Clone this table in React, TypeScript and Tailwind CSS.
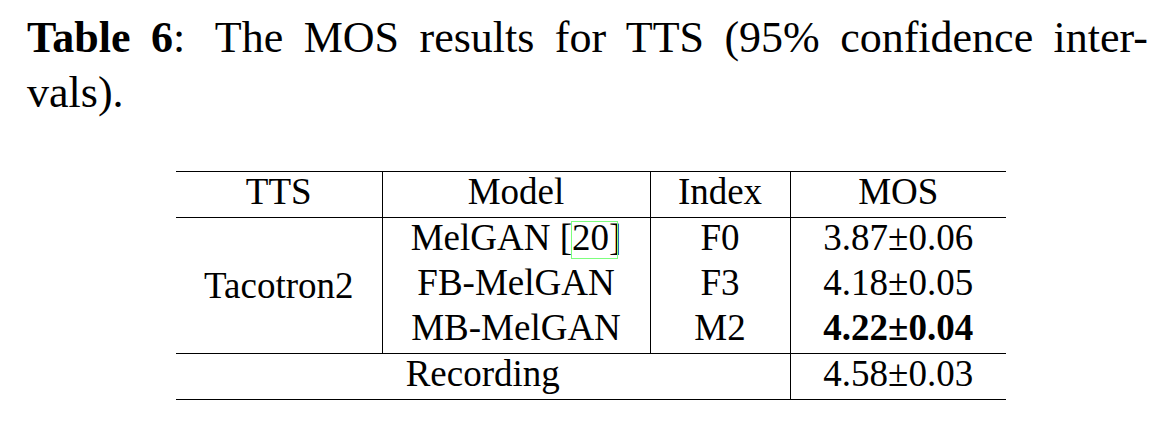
export default function App() {
  const rows = [
    { model: "MelGAN", cite: "20", index: "F0", mos: "3.87±0.06", bold: false },
    { model: "FB-MelGAN", cite: "", index: "F3", mos: "4.18±0.05", bold: false },
    { model: "MB-MelGAN", cite: "", index: "M2", mos: "4.22±0.04", bold: true },
  ];

  const cell = "p-0 pb-[6px] leading-[39px] text-center align-top";

  return (
    <div className="w-[1175px] h-[436px] bg-white text-black font-['Liberation_Serif',serif] overflow-hidden">
      <div className="pt-[10px] pl-[27px] w-[1148px]">
        <p className="text-[44px] leading-[55px]">
          <span className="block text-justify [text-align-last:justify]">
            <b>Table 6</b>:<span className="inline-block w-[10px]" /> The MOS results for TTS (95% confidence inter-
          </span>
          vals).
        </p>
      </div>

      <div className="pl-[176px] mt-[51px]">
        <table className="border-collapse text-[37px] w-[830px] table-fixed">
          <colgroup>
            <col className="w-[206px]" />
            <col className="w-[268px]" />
            <col className="w-[140px]" />
            <col className="w-[216px]" />
          </colgroup>
          <thead>
            <tr className="border-t border-b border-black">
              <th className={`${cell} font-normal border-r border-black`}>TTS</th>
              <th className={`${cell} font-normal border-r border-black`}>Model</th>
              <th className={`${cell} font-normal border-r border-black`}>Index</th>
              <th className={`${cell} font-normal`}>MOS</th>
            </tr>
          </thead>
          <tbody>
            {rows.map((r, i) => (
              <tr key={i}>
                {i === 0 && (
                  <td rowSpan={3} className="p-0 text-center align-middle leading-[39px] border-r border-black">
                    Tacotron2
                  </td>
                )}
                <td className={`${cell} border-r border-black`}>
                  {r.model}
                  {r.cite && (
                    <>
                      {" ["}
                      <span className="relative">
                        {r.cite}]
                        <span className="absolute left-[-1px] right-[3px] top-[4px] bottom-[-1px] border border-[#7dff7d]" />
                      </span>
                    </>
                  )}
                </td>
                <td className={`${cell} border-r border-black`}>{r.index}</td>
                <td className={`${cell} ${r.bold ? "font-bold" : ""}`}>{r.mos}</td>
              </tr>
            ))}
            <tr className="border-t border-b border-black">
              <td colSpan={3} className={`${cell} border-r border-black`}>Recording</td>
              <td className={cell}>4.58±0.03</td>
            </tr>
          </tbody>
        </table>
      </div>
    </div>
  );
}
